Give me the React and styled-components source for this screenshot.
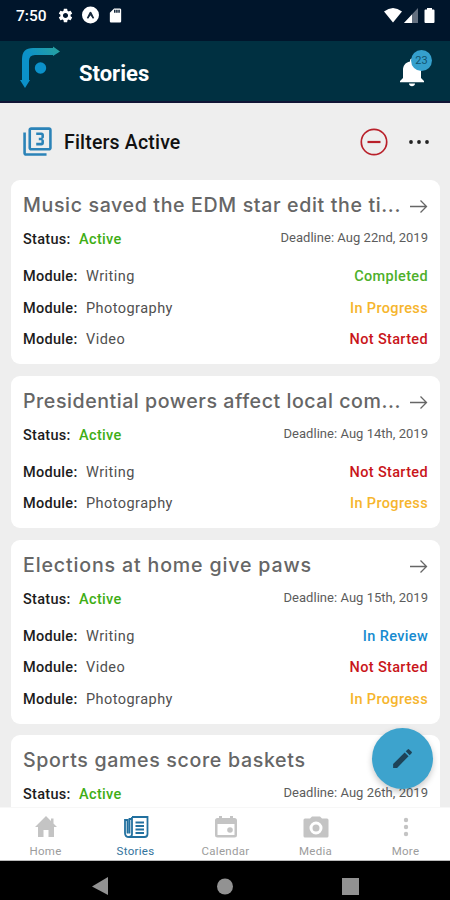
import React from 'react';
import styled, { createGlobalStyle } from 'styled-components';
import { MdSettings, MdSdCard, MdOutlineFilter3, MdEdit } from 'react-icons/md';

const GlobalStyle = createGlobalStyle`
  * { box-sizing: border-box; }
  body { margin: 0; background: #000; font-family: Roboto, sans-serif; }
  svg { display: block; flex: none; }
`;

const Screen = styled.div`
  position: relative;
  width: 450px;
  height: 900px;
  display: flex;
  flex-direction: column;
  overflow: hidden;
  background: #eeeeee;
`;

const StatusBar = styled.div`
  height: 41px;
  flex: none;
  display: flex;
  align-items: flex-start;
  padding: 6px 14px 0 16px;
  background: #00152b;
  color: #fff;
`;

const Clock = styled.span`
  width: 41px;
  font-size: 15.5px;
  line-height: 20px;
  font-weight: 500;
`;

const StatusIcons = styled.div`
  display: flex;
  align-items: center;
  height: 18px;
  gap: ${(p) => p.$gap}px;
  margin-left: ${(p) => (p.$end ? 'auto' : 0)};
`;

const Header = styled.header`
  height: 62px;
  flex: none;
  display: flex;
  align-items: flex-start;
  padding: 5px 25px 0 19px;
  background: #003041;
  border-bottom: 2px solid #101536;
`;

const HeaderTitle = styled.h1`
  margin: 15px 0 0 17px;
  font-size: 22px;
  line-height: 26px;
  font-weight: 700;
  letter-spacing: 0;
  color: #fff;
`;

const BellButton = styled.div`
  position: relative;
  margin: 10px 0 0 auto;
`;

const Badge = styled.span`
  position: absolute;
  left: 12px;
  top: -6px;
  width: 21px;
  height: 21px;
  border-radius: 50%;
  background: #35a0cd;
  color: #12546f;
  font-size: 11px;
  line-height: 21px;
  text-align: center;
`;

const FilterBar = styled.div`
  height: 77px;
  flex: none;
  display: flex;
  align-items: center;
  padding: 0 21px 0 22px;
  color: #111;
`;

const FilterLabel = styled.h2`
  flex: 1;
  margin: 2px 0 0 11px;
  font-size: 19.5px;
  font-weight: 500;
  letter-spacing: 0.18px;
`;

const FilterActions = styled.div`
  display: flex;
  align-items: center;
  gap: 21px;
`;

const StoryList = styled.main`
  flex: 1;
  min-height: 0;
  overflow: hidden;
  display: flex;
  flex-direction: column;
  gap: 11.5px;
  padding: 0 10.5px 0 11px;
`;

const Card = styled.article`
  flex: none;
  padding: 12px 11.5px 8.5px 12px;
  border-radius: 9px;
  background: #fff;
`;

const CardHead = styled.div`
  display: flex;
  align-items: center;
  justify-content: space-between;
  height: 28px;
`;

const StoryTitle = styled.h3`
  margin: -2px 0 0;
  font-family: Inter, sans-serif;
  font-size: 19.6px;
  line-height: 28px;
  font-weight: 500;
  letter-spacing: ${(p) => p.$tracking}px;
  color: #666;
  white-space: nowrap;
`;

const MetaRow = styled.div`
  display: flex;
  justify-content: space-between;
  height: 41px;
  padding-top: 9px;
  font-size: 14.5px;
  line-height: 22px;
`;

const ModuleRow = styled.div`
  display: flex;
  justify-content: space-between;
  align-items: center;
  height: 31.5px;
  font-size: 14.5px;
`;

const Label = styled.span`
  display: inline-block;
  width: ${(p) => p.$width}px;
  color: #1c1c1c;
  font-weight: 500;
  letter-spacing: 0.3px;
`;

const ModuleName = styled.span`
  color: #505050;
  font-weight: 400;
  letter-spacing: 0.45px;
`;

const Deadline = styled.span`
  margin-top: -2px;
  color: #5c5c5c;
  font-size: 13px;
  letter-spacing: 0.03px;
`;

const stateColors = {
  Active: '#3fae16',
  Completed: '#4eb02a',
  'In Progress': '#f6b52c',
  'Not Started': '#c9151a',
  'In Review': '#168bd0',
};

const State = styled.span`
  color: ${(p) => stateColors[p.children]};
  font-weight: 500;
  letter-spacing: 0.35px;
`;

const TabBar = styled.nav`
  height: 54px;
  flex: none;
  display: grid;
  grid-template-columns: repeat(5, 1fr);
  background: #fff;
  border-top: 1px solid #f7f7f7;
  border-bottom: 1px solid #bbb;
`;

const Tab = styled.div`
  display: flex;
  flex-direction: column;
  align-items: center;
  padding: 7px 0 0 1px;
  gap: 4px;
  font-size: 11.5px;
  line-height: 16px;
  letter-spacing: 0.3px;
  color: ${(p) => (p.$active ? '#32739c' : '#9c9c9c')};
  svg { color: ${(p) => (p.$active ? '#22709f' : '#c4c4c4')}; }
`;

const SystemNav = styled.footer`
  height: 39px;
  flex: none;
  display: flex;
  justify-content: center;
  align-items: flex-start;
  gap: 108px;
  padding-top: 15px;
  background: #000;
  color: #929292;
`;

const Fab = styled.button`
  position: absolute;
  left: 372px;
  top: 728px;
  width: 61px;
  height: 61px;
  padding: 0;
  border: 0;
  border-radius: 50%;
  display: grid;
  place-items: center;
  background: #3da3cd;
  color: #1e4358;
  box-shadow: 0 3px 6px rgba(0, 0, 0, 0.22);
`;

const Logo = () => (
  <svg width="43" height="43" viewBox="0 0 43 43">
    <defs>
      <linearGradient id="logo" x1="0" y1="1" x2="1" y2="0">
        <stop offset="0.5" stopColor="#0b91c9" />
        <stop offset="1" stopColor="#2ba39b" />
      </linearGradient>
    </defs>
    <path fill="url(#logo)" d="M3 34V13Q3 2 14 2H34V0.500L41 5.500L34 10V9H16Q10 9 10 15V34H11L6 42L1 34Z" />
    <circle cx="21.500" cy="22" r="5.700" fill="#0b91c9" />
  </svg>
);

const Bell = () => (
  <svg width="26" height="32" viewBox="0 0 26 32" fill="#fff">
    <path d="M13 2.500a2 2 0 0 1 2 2v1C20 6.600 22 10 22 14v8l3 3v1.200H1V25l3-3v-8c0-4 2-7.400 7-8.500v-1a2 2 0 0 1 2-2zM10 27.500h6c0 3.500-6 3.500-6 0z" />
  </svg>
);

const Arrow = () => (
  <svg width="19" height="16" viewBox="0 0 19 16" fill="none" stroke="#666" strokeWidth="1.300">
    <path d="M1 8.500h16M11.500 2.500l6 6-6 6" />
  </svg>
);

const icons = {
  Home: (
    <svg width="24" height="24" viewBox="0 0 24 24" fill="currentColor">
      <path d="M12 1 1 12h3v10h5.500v-7h5v7H20V12h3l-3.500-3.500V3.500h-2.500V6z" />
    </svg>
  ),
  Stories: (
    <svg width="26" height="24" viewBox="0 0 26 24" fill="none" stroke="currentColor" strokeWidth="1.800">
      <path d="M9 2h15.500v17q0 3-3 3h-16M9 2v17q0 3-3 3Q2 22 2 18V5h2.500v13.500M9 4H6.500v14.500" />
      <path d="M12.500 7.500h8.500M12.500 11h8.500M12.500 14.500h8.500M12.500 18h8.500" />
    </svg>
  ),
  Calendar: (
    <svg width="24" height="24" viewBox="0 0 24 24" fill="currentColor" fillRule="evenodd">
      <path d="M5 1h3v2h8V1h3v2h1.500Q23 3 23 5.500V20q0 2.500-2.500 2.500h-17Q1 22.500 1 20V5.500Q1 3 3.500 3H5zM3.500 9v11h17V9z" />
      <circle cx="16" cy="15" r="2.800" />
    </svg>
  ),
  Media: (
    <svg width="26" height="24" viewBox="0 0 26 24" fill="currentColor" fillRule="evenodd">
      <path d="M9 1.500h8l2 2h5q1.500 0 1.500 1.500V21q0 1.500-1.500 1.500H2Q0.500 22.500 0.500 21V5Q0.500 3.500 2 3.500h5zM13 6.500a6.500 6.500 0 1 0 0 13 6.500 6.500 0 0 0 0-13zM13 9.500a3.500 3.500 0 1 1 0 7 3.500 3.500 0 0 1 0-7z" />
    </svg>
  ),
  More: (
    <svg width="24" height="24" viewBox="0 0 24 24" fill="currentColor">
      <circle cx="12" cy="5" r="2.200" />
      <circle cx="12" cy="12" r="2.200" />
      <circle cx="12" cy="19" r="2.200" />
    </svg>
  ),
};

const stories = [
  {
    title: 'Music saved the EDM star edit the ti...',
    tracking: 0.63,
    deadline: 'Aug 22nd, 2019',
    modules: [['Writing', 'Completed'], ['Photography', 'In Progress'], ['Video', 'Not Started']],
  },
  {
    title: 'Presidential powers affect local com...',
    tracking: 0.54,
    deadline: 'Aug 14th, 2019',
    modules: [['Writing', 'Not Started'], ['Photography', 'In Progress']],
  },
  {
    title: 'Elections at home give paws',
    tracking: 0.84,
    deadline: 'Aug 15th, 2019',
    modules: [['Writing', 'In Review'], ['Video', 'Not Started'], ['Photography', 'In Progress']],
  },
  {
    title: 'Sports games score baskets',
    tracking: 0.66,
    deadline: 'Aug 26th, 2019',
    modules: [],
  },
];

const Story = ({ story }) => (
  <Card>
    <CardHead>
      <StoryTitle $tracking={story.tracking}>{story.title}</StoryTitle>
      <Arrow />
    </CardHead>
    <MetaRow>
      <span>
        <Label $width={56}>Status:</Label>
        <State>Active</State>
      </span>
      <Deadline>Deadline: {story.deadline}</Deadline>
    </MetaRow>
    {story.modules.map(([name, state]) => (
      <ModuleRow key={name}>
        <span>
          <Label $width={63}>Module:</Label>
          <ModuleName>{name}</ModuleName>
        </span>
        <State>{state}</State>
      </ModuleRow>
    ))}
  </Card>
);

export default function App() {
  return (
    <Screen>
      <GlobalStyle />
      <StatusBar>
        <Clock>7:50</Clock>
        <StatusIcons $gap={8}>
          <MdSettings size={17} />
          <svg width="17" height="18" viewBox="0 0 17 18">
            <circle cx="8.500" cy="9" r="8.500" fill="#fff" />
            <path d="M4.800 12 7.500 6.500Q8.500 5 9.500 6.500L12.200 12 10.800 12.800 8.500 9.500 6.200 12.800z" fill="#17283b" />
            <path d="M8.500 9.500 10.500 13h-4z" fill="#fff" />
          </svg>
          <MdSdCard size={17} />
        </StatusIcons>
        <StatusIcons $gap={2} $end>
          <svg width="18" height="15" viewBox="0 0 18 15" fill="#fff">
            <path d="M0 3.500Q9-3.500 18 3.500L9 14.500z" />
          </svg>
          <svg width="14" height="15" viewBox="0 0 14 15">
            <path d="M14 0v15H0z" fill="#647080" />
            <path d="M8 6.430V15H0z" fill="#fff" />
          </svg>
          <svg width="16" height="17" viewBox="0 0 16 17" fill="#fff">
            <path d="M7 1h5v1.500h1.500q1 0 1 1V15q0 1-1 1h-8q-1 0-1-1V3.500q0-1 1-1H7z" />
          </svg>
        </StatusIcons>
      </StatusBar>
      <Header>
        <Logo />
        <HeaderTitle>Stories</HeaderTitle>
        <BellButton>
          <Bell />
          <Badge>23</Badge>
        </BellButton>
      </Header>
      <FilterBar>
        <MdOutlineFilter3 size={31} color="#2b83b8" />
        <FilterLabel>Filters Active</FilterLabel>
        <FilterActions>
          <svg width="28" height="28" viewBox="0 0 28 28" fill="none" stroke="#b9202a">
            <circle cx="14" cy="14" r="12.700" strokeWidth="1.700" />
            <path d="M7.500 14h13" strokeWidth="2.200" />
          </svg>
          <svg width="20" height="6" viewBox="0 0 20 6" fill="#222">
            <circle cx="2" cy="3" r="1.900" />
            <circle cx="10" cy="3" r="1.900" />
            <circle cx="18" cy="3" r="1.900" />
          </svg>
        </FilterActions>
      </FilterBar>
      <StoryList>
        {stories.map((story) => (
          <Story key={story.title} story={story} />
        ))}
      </StoryList>
      <TabBar>
        {Object.entries(icons).map(([name, icon]) => (
          <Tab key={name} $active={name === 'Stories'}>
            {icon}
            {name}
          </Tab>
        ))}
      </TabBar>
      <SystemNav>
        <svg width="17" height="20" viewBox="0 0 17 20" fill="currentColor">
          <path d="M17 1v18L1 10.500z" />
        </svg>
        <svg width="18" height="20" viewBox="0 0 18 20" fill="currentColor">
          <circle cx="9" cy="10.500" r="8" />
        </svg>
        <svg width="17" height="20" viewBox="0 0 17 20" fill="currentColor">
          <path d="M0 2h17v17H0z" />
        </svg>
      </SystemNav>
      <Fab aria-label="Edit">
        <MdEdit size={25} />
      </Fab>
    </Screen>
  );
}
